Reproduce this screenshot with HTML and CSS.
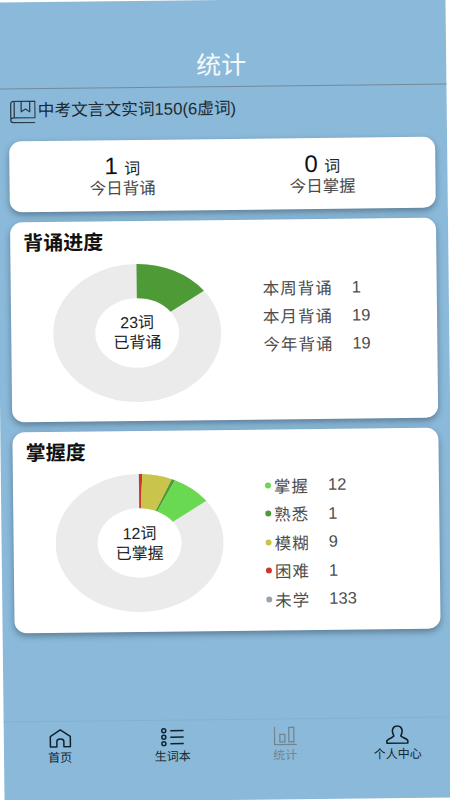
FILE: index.html
```html
<!DOCTYPE html>
<html lang="zh-CN">
<head>
<meta charset="utf-8">
<title>统计</title>
<link rel="stylesheet" href="styles.css">
</head>
<body>
<div class="page">
  <header class="header"><h1 class="header-title">统计</h1></header>
  <div class="book-row">
    <svg class="book-icon" viewBox="0 0 26 23" fill="none" stroke="#2b3d4a" stroke-width="1.3" stroke-linejoin="round">
      <path d="M1 20V4Q1 1 4 1H25.300V17.500H4.500Q1 17.500 1 20Q1 22.400 4.500 22.400H25.300"/>
      <path d="M4.500 1V17.500M11.500 1V11.500L15.700 8.800L20 11.500V1"/>
    </svg>
    <span class="book-name">中考文言文实词150(6虚词)</span>
  </div>
  <main class="cards">
    <section class="card today">
      <div class="today-col">
        <div class="today-num"><b>1</b> 词</div>
        <div class="today-label">今日背诵</div>
      </div>
      <div class="today-col">
        <div class="today-num"><b>0</b> 词</div>
        <div class="today-label">今日掌握</div>
      </div>
    </section>
    <section class="card chart-card recite">
      <h2 class="card-title">背诵进度</h2>
      <div class="chart-body">
        <div class="donut">
          <svg class="donut-svg" viewBox="0 0 168 138">
            <path class="seg-rest" fill-rule="evenodd" d="M84 0A84 69 0 1 1 83.990 0ZM84 34.300A42 34.700 0 1 0 84.010 34.300Z"/>
            <path class="seg-dark" d="M84 0A84 69 0 0 1 151.160 27.550L117.580 48.160A42 34.700 0 0 0 84 34.300Z"/>
          </svg>
          <div class="donut-text">23词<br>已背诵</div>
        </div>
        <ul class="legend legend-recite">
          <li class="legend-row"><span class="legend-label">本周背诵</span><span>1</span></li>
          <li class="legend-row"><span class="legend-label">本月背诵</span><span>19</span></li>
          <li class="legend-row"><span class="legend-label">今年背诵</span><span>19</span></li>
        </ul>
      </div>
    </section>
    <section class="card chart-card mastery">
      <h2 class="card-title">掌握度</h2>
      <div class="chart-body">
        <div class="donut">
          <svg class="donut-svg" viewBox="0 0 168 138">
            <path class="seg-rest" fill-rule="evenodd" d="M84 0A84 69 0 1 1 83.990 0ZM84 34.300A42 34.700 0 1 0 84.010 34.300Z"/>
            <path class="seg-red" d="M84 0A84 69 0 0 1 87.390 .06L85.690 34.330A42 34.700 0 0 0 84 34.300Z"/>
            <path class="seg-yellow" d="M87.390 .06A84 69 0 0 1 116.930 5.520L100.460 37.080A42 34.700 0 0 0 85.690 34.330Z"/>
            <path class="seg-dark" d="M116.930 5.520A84 69 0 0 1 120 6.660L102 37.650A42 34.700 0 0 0 100.460 37.080Z"/>
            <path class="seg-light" d="M120 6.660A84 69 0 0 1 151.160 27.550L117.580 48.160A42 34.700 0 0 0 102 37.650Z"/>
          </svg>
          <div class="donut-text">12词<br>已掌握</div>
        </div>
        <ul class="legend legend-mastery">
          <li class="legend-row"><i class="dot dot-light"></i><span class="legend-label">掌握</span><span>12</span></li>
          <li class="legend-row"><i class="dot dot-dark"></i><span class="legend-label">熟悉</span><span>1</span></li>
          <li class="legend-row"><i class="dot dot-yellow"></i><span class="legend-label">模糊</span><span>9</span></li>
          <li class="legend-row"><i class="dot dot-red"></i><span class="legend-label">困难</span><span>1</span></li>
          <li class="legend-row"><i class="dot dot-grey"></i><span class="legend-label">未学</span><span>133</span></li>
        </ul>
      </div>
    </section>
  </main>
  <nav class="tabbar">
    <div class="tab">
      <svg class="tab-icon" viewBox="0 0 23 19" fill="none" stroke="#10212e" stroke-width="1.5" stroke-linejoin="round">
        <path d="M1.500 18V7.500L11.500 1L21.500 7.500V18H15V12.500Q15 10 11.500 10Q8 10 8 12.500V18Z"/>
      </svg>
      <span>首页</span>
    </div>
    <div class="tab">
      <svg class="tab-icon" viewBox="0 0 23 19" fill="none" stroke="#10212e" stroke-width="1.500">
        <circle cx="3" cy="3" r="2"/><circle cx="3" cy="9.500" r="2"/><circle cx="3" cy="16" r="2"/>
        <path d="M9.500 3H23M9.500 9.500H23M9.500 16H23"/>
      </svg>
      <span>生词本</span>
    </div>
    <div class="tab tab-active">
      <svg class="tab-icon" viewBox="0 0 23 19" fill="none" stroke="#73848f" stroke-width="1.300">
        <path d="M.700 0V18.300H23"/>
        <rect x="6" y="8" width="5" height="7.500"/><rect x="15" y="1" width="5" height="14.500"/>
      </svg>
      <span>统计</span>
    </div>
    <div class="tab">
      <svg class="tab-icon" viewBox="0 0 23 19" fill="none" stroke="#10212e" stroke-width="1.600" stroke-linejoin="round">
        <path d="M8 10.800C5 4.500 7.500 1 11.500 1C15.500 1 18 4.500 15 10.800C14.500 12 20 13 22 15.500V18H1V15.500C3 13 8.500 12 8 10.800Z"/>
      </svg>
      <span>个人中心</span>
    </div>
  </nav>
</div>
</body>
</html>
```
FILE: styles.css
```css
* { box-sizing: border-box; }
html, body { margin: 0; padding: 0; width: 450px; height: 800px; overflow: hidden; background: #fff; }
body { font-family: "Liberation Sans", "Noto Sans CJK SC", sans-serif; color: #222; }
.page {
  width: 450px; height: 800px; background: #8bb9d9;
  display: flex; flex-direction: column;
  transform: rotate(-0.65deg); transform-origin: 50% 50%;
}
.header { height: 87px; padding-top: 45px; border-bottom: 1px solid #76899a; }
.header-title { margin: 0; text-align: center; font-size: 25px; line-height: 40px; font-weight: 400; color: #f3f8fb; }
.book-row { display: flex; align-items: center; gap: 2px; padding: 11px 0 0 13px; height: 34px; }
.book-icon { width: 26px; height: 23px; flex: none; }
.book-name { font-size: 16.700px; line-height: 22px; color: #1d2a33; margin-top: -1px; white-space: nowrap; }
.cards { flex: 1; display: flex; flex-direction: column; gap: 10.500px; padding: 17.500px 12px 0; }
.card { background: #fff; border-radius: 12px; box-shadow: 0 3px 6px rgba(30, 50, 70, .45); }
.today { height: 71px; display: flex; justify-content: center; padding-top: 13px; }
.today-col { width: 200px; text-align: center; }
.today-num { font-size: 16px; line-height: 25px; color: #222; }
.today-num b { font-size: 24px; font-weight: 400; color: #111; margin-right: 2px; }
.today-label { font-size: 16.500px; line-height: 18px; color: #4a4a4a; margin-top: -2px; }
.chart-card { padding: 9px 0 0 13px; }
.recite { height: 199.500px; }
.mastery { height: 201px; }
.card-title { margin: 0; font-size: 20px; line-height: 25px; font-weight: 700; color: #111; }
.chart-body { display: flex; align-items: flex-start; padding: 8.500px 0 0 29px; }
.donut { position: relative; width: 168px; height: 138px; flex: none; }
.donut-svg { display: block; width: 168px; height: 138px; }
.donut-text { position: absolute; inset: 0; text-align: center; padding-top: 49px; font-size: 16px; line-height: 20px; color: #222; }
.mastery .donut-text { padding-top: 50px; }
.seg-rest { fill: #ebebeb; }
.seg-dark { fill: #4e9a36; }
.seg-light { fill: #69d952; }
.seg-yellow { fill: #c8c44c; }
.seg-red { fill: #c8392b; }
.legend { list-style: none; margin: 0; padding: 0; font-size: 16.500px; color: #4d4d4d; }
.legend-row { display: flex; align-items: center; height: 28px; }
.legend-label { letter-spacing: 1px; margin-right: 19px; }
.legend-recite { margin: 11.800px 0 0 42px; }
.legend-recite .legend-label { width: 70px; }
.legend-mastery { margin: -1px 0 0 41px; }
.legend-mastery .legend-row { height: 28.500px; }
.legend-mastery .legend-label { width: 35px; }
.dot { width: 6px; height: 6px; border-radius: 50%; margin: 0 3px 0 1px; flex: none; }
.dot-light { background: #69d952; }
.dot-dark { background: #4e9a36; }
.dot-yellow { background: #c8c44c; }
.dot-red { background: #c8392b; }
.dot-grey { background: #9aa3ab; }
.tabbar { height: 81px; display: grid; grid-template-columns: repeat(4, 1fr); border-top: 1px solid #83b1d1; padding-top: 7px; }
.tab { display: flex; flex-direction: column; align-items: center; font-size: 12px; line-height: 16px; color: #14242f; }
.tab-icon { width: 23px; height: 19px; margin-bottom: 2px; }
.tab-active { color: #73848f; }
```
